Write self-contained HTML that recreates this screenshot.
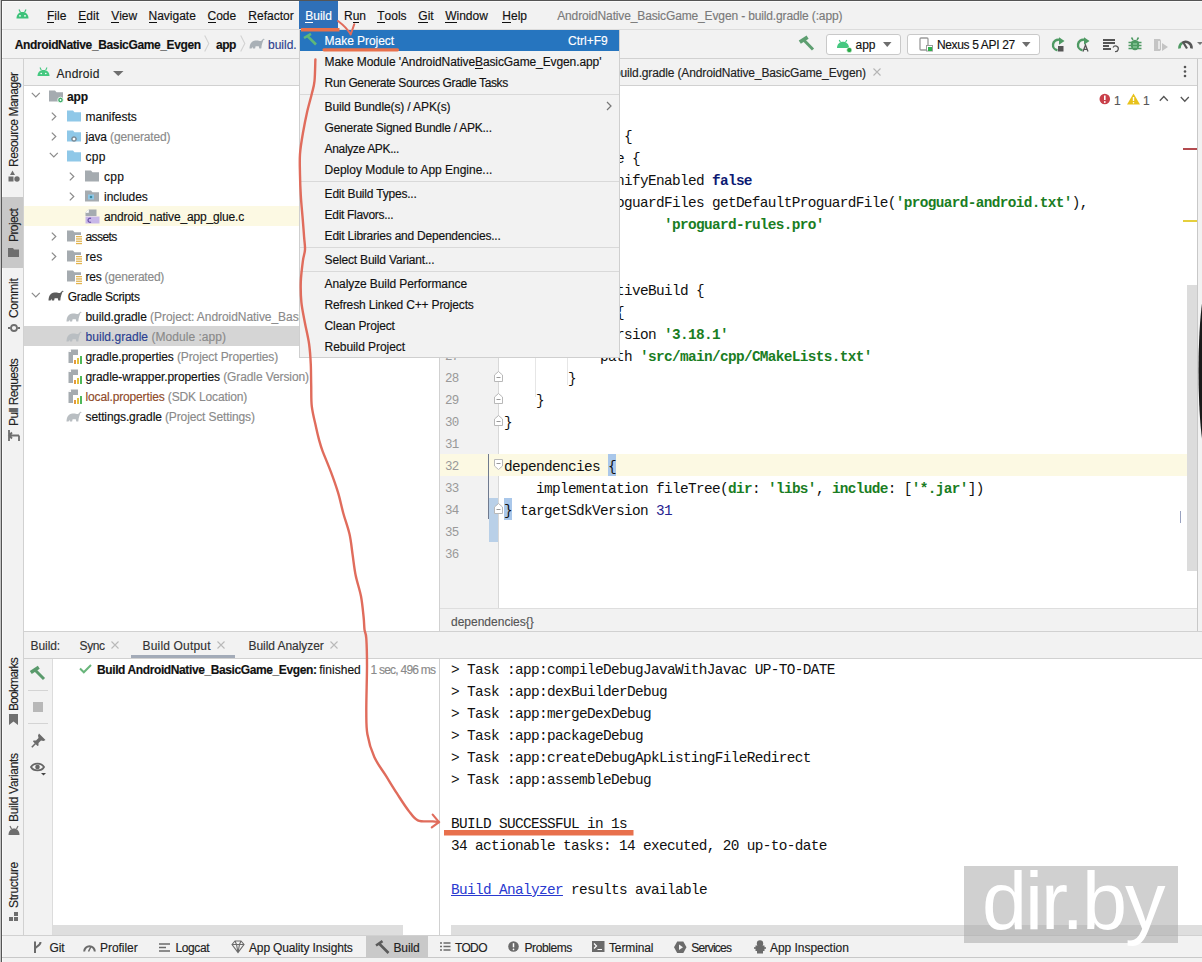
<!DOCTYPE html>
<html><head><meta charset="utf-8">
<style>
*{margin:0;padding:0;box-sizing:border-box}
html,body{width:1202px;height:962px;overflow:hidden;background:#f2f2f2}
body{position:relative;font-family:"Liberation Sans",sans-serif;font-size:12px;color:#1e1e1e}
.a{position:absolute}
.s{position:absolute;white-space:nowrap;-webkit-text-stroke:0.15px currentColor;font-family:"Liberation Sans",sans-serif;font-size:12px;line-height:14px;color:#111}
.m{position:absolute;white-space:pre;font-family:"Liberation Mono",monospace;font-size:14.4px;letter-spacing:-0.64px;line-height:22px;color:#101010}
.b{font-weight:bold}
.g{color:#8a8a8a}
u{text-decoration:none;border-bottom:1px solid currentColor;display:inline-block;line-height:11px}
svg{position:absolute;overflow:visible}
</style></head><body>
<div class="a" style="left:0px;top:0px;width:1202px;height:1px;background:#555;"></div>
<div class="a" style="left:2px;top:1px;width:1200px;height:1px;background:#fbfbfb;"></div>
<div class="a" style="left:0px;top:0px;width:1px;height:962px;background:#c4c4c4;"></div>
<div class="a" style="left:1px;top:0px;width:1px;height:962px;background:#555;"></div>
<div class="a" style="left:2px;top:1px;width:1px;height:961px;background:#fbfbfb;"></div>
<div class="a" style="left:2px;top:29px;width:1200px;height:1px;background:#dcdcdc;"></div>
<div class="a" style="left:299px;top:1px;width:39px;height:28px;background:#2f70b8;"></div>
<div class="a" style="left:2px;top:58px;width:1200px;height:1px;background:#d1d1d1;"></div>
<div class="a" style="left:23px;top:59px;width:1px;height:876px;background:#d1d1d1;"></div>
<div class="a" style="left:24px;top:85px;width:415px;height:1px;background:#d1d1d1;"></div>
<div class="a" style="left:24px;top:86px;width:415px;height:545px;background:#fff;"></div>
<div class="a" style="left:24px;top:206px;width:415px;height:20px;background:#fcf9e3;"></div>
<div class="a" style="left:24px;top:326px;width:415px;height:20px;background:#d5d5d5;"></div>
<div class="a" style="left:439px;top:59px;width:1px;height:572px;background:#d1d1d1;"></div>
<div class="a" style="left:440px;top:85px;width:758px;height:1px;background:#d1d1d1;"></div>
<div class="a" style="left:440px;top:86px;width:758px;height:523px;background:#fff;"></div>
<div class="a" style="left:440px;top:86px;width:58px;height:523px;background:#f2f2f2;"></div>
<div class="a" style="left:498px;top:86px;width:1px;height:523px;background:#d8d8d8;"></div>
<div class="a" style="left:1197px;top:59px;width:1px;height:572px;background:#c8c8c8;"></div>
<div class="a" style="left:440px;top:454px;width:757px;height:22px;background:#fcf9e3;"></div>
<div class="a" style="left:440px;top:608px;width:757px;height:1px;background:#dedede;"></div>
<div class="a" style="left:24px;top:631px;width:1178px;height:1px;background:#d1d1d1;"></div>
<div class="a" style="left:24px;top:658px;width:1178px;height:1px;background:#d1d1d1;"></div>
<div class="a" style="left:52px;top:659px;width:1px;height:276px;background:#dcdcdc;"></div>
<div class="a" style="left:53px;top:659px;width:386px;height:276px;background:#fff;"></div>
<div class="a" style="left:439px;top:659px;width:1px;height:276px;background:#d1d1d1;"></div>
<div class="a" style="left:440px;top:659px;width:762px;height:276px;background:#fff;"></div>
<div class="a" style="left:2px;top:935px;width:1200px;height:1px;background:#d1d1d1;"></div>
<div class="a" style="left:2px;top:957px;width:1200px;height:1px;background:#c8c8c8;"></div>
<div class="a" style="left:366px;top:936px;width:62px;height:21px;background:#c9c9c9;"></div>
<div class="s " style="left:47px;top:9.1px;"><u>F</u>ile</div>
<div class="s " style="left:78.3px;top:9.1px;"><u>E</u>dit</div>
<div class="s " style="left:111.2px;top:9.1px;"><u>V</u>iew</div>
<div class="s " style="left:148.5px;top:9.1px;"><u>N</u>avigate</div>
<div class="s " style="left:207.5px;top:9.1px;"><u>C</u>ode</div>
<div class="s " style="left:248.3px;top:9.1px;"><u>R</u>efactor</div>
<div class="s " style="left:377.2px;top:9.1px;"><u>T</u>ools</div>
<div class="s " style="left:418.3px;top:9.1px;"><u>G</u>it</div>
<div class="s " style="left:445.2px;top:9.1px;"><u>W</u>indow</div>
<div class="s " style="left:502.3px;top:9.1px;"><u>H</u>elp</div>
<div class="s " style="left:344px;top:9.1px;">R<u>u</u>n</div>
<div class="s " style="left:305.2px;top:9.1px;color:#fff"><u>B</u>uild</div>
<div class="s " style="left:557.2px;top:9.1px;color:#7a7a7a;letter-spacing:-0.138px">AndroidNative_BasicGame_Evgen - build.gradle (:app)</div>
<div class="s b" style="left:14.7px;top:38.2px;;letter-spacing:-0.367px">AndroidNative_BasicGame_Evgen</div>
<div class="s b" style="left:216px;top:38.2px;;letter-spacing:-0.511px">app</div>
<div class="s " style="left:268px;top:38.2px;color:#2f3f8f">build.</div>
<div class="s " style="left:56.5px;top:66.6px;color:#222;letter-spacing:0.248px">Android</div>
<div class="s b" style="left:67px;top:90.2px;;letter-spacing:-0.178px">app</div>
<div class="s " style="left:85.5px;top:110.2px;;letter-spacing:-0.006px">manifests</div>
<div class="s " style="left:85.5px;top:130.2px;;letter-spacing:-0.155px">java <span class="g">(generated)</span></div>
<div class="s " style="left:85.5px;top:150.2px;;letter-spacing:0.318px">cpp</div>
<div class="s " style="left:104px;top:170.2px;;letter-spacing:0.318px">cpp</div>
<div class="s " style="left:104px;top:190.2px;;letter-spacing:-0.028px">includes</div>
<div class="s " style="left:104px;top:210.2px;;letter-spacing:-0.164px">android_native_app_glue.c</div>
<div class="s " style="left:85.5px;top:230.2px;;letter-spacing:-0.564px">assets</div>
<div class="s " style="left:85.5px;top:250.2px;;letter-spacing:0.043px">res</div>
<div class="s " style="left:85.5px;top:270.2px;;letter-spacing:-0.230px">res <span class="g">(generated)</span></div>
<div class="s " style="left:67.7px;top:290.2px;;letter-spacing:-0.295px">Gradle Scripts</div>
<div class="s " style="left:85.5px;top:310.2px;;letter-spacing:-0.060px">build.gradle <span class="g">(Project: AndroidNative_BasicGame_Evgen)</span></div>
<div class="s " style="left:85.5px;top:330.2px;;letter-spacing:0.042px"><span style="color:#2a3f91">build.gradle</span> <span class="g">(Module :app)</span></div>
<div class="s " style="left:85.5px;top:350.2px;;letter-spacing:-0.109px">gradle.properties <span class="g">(Project Properties)</span></div>
<div class="s " style="left:85.5px;top:370.2px;;letter-spacing:-0.094px">gradle-wrapper.properties <span class="g">(Gradle Version)</span></div>
<div class="s " style="left:85.5px;top:390.2px;;letter-spacing:-0.144px"><span style="color:#8f4a2a">local.properties</span> <span class="g">(SDK Location)</span></div>
<div class="s " style="left:85.5px;top:410.2px;;letter-spacing:-0.121px">settings.gradle <span class="g">(Project Settings)</span></div>
<div class="s " style="left:614px;top:66.1px;color:#222;letter-spacing:-0.144px">build.gradle (AndroidNative_BasicGame_Evgen)</div>
<div class="s " style="left:451px;top:614.6px;color:#555">dependencies{}</div>
<div class="s " style="left:30.6px;top:638.6px;color:#333;letter-spacing:-0.086px">Build:</div>
<div class="s " style="left:79.5px;top:638.6px;color:#333;letter-spacing:-0.370px">Sync</div>
<div class="s " style="left:142.5px;top:638.6px;color:#333;letter-spacing:0.180px">Build Output</div>
<div class="s " style="left:248.5px;top:638.6px;color:#333;letter-spacing:-0.053px">Build Analyzer</div>
<div class="s b" style="left:97px;top:663.0px;;letter-spacing:-0.392px">Build AndroidNative_BasicGame_Evgen:</div>
<div class="s " style="left:319.2px;top:663.0px;;letter-spacing:0.030px">finished</div>
<div class="s g" style="left:370.4px;top:663.0px;;letter-spacing:-0.754px">1 sec, 496 ms</div>
<div class="s " style="left:49.5px;top:940.6px;color:#222;letter-spacing:-0.111px">Git</div>
<div class="s " style="left:100px;top:940.6px;color:#222;letter-spacing:-0.051px">Profiler</div>
<div class="s " style="left:175.5px;top:940.6px;color:#222;letter-spacing:-0.388px">Logcat</div>
<div class="s " style="left:249px;top:940.6px;color:#222;letter-spacing:-0.151px">App Quality Insights</div>
<div class="s " style="left:393.5px;top:940.6px;color:#222;letter-spacing:-0.137px">Build</div>
<div class="s " style="left:455px;top:940.6px;color:#222;letter-spacing:-0.662px">TODO</div>
<div class="s " style="left:524.5px;top:940.6px;color:#222;letter-spacing:-0.423px">Problems</div>
<div class="s " style="left:609px;top:940.6px;color:#222;letter-spacing:-0.131px">Terminal</div>
<div class="s " style="left:691.2px;top:940.6px;color:#222;letter-spacing:-0.739px">Services</div>
<div class="s " style="left:770px;top:940.6px;color:#222;letter-spacing:-0.042px">App Inspection</div>
<div class="a" style="left:2px;top:197px;width:21px;height:71px;background:#c8c8c8;"></div>
<div class="s" style="left:7.3px;top:166.8px;transform-origin:0 0;transform:rotate(-90deg);letter-spacing:-0.478px;color:#222">Resource Manager</div>
<div class="s" style="left:7.1px;top:242.2px;transform-origin:0 0;transform:rotate(-90deg);letter-spacing:-0.593px;color:#222">Project</div>
<div class="s" style="left:7.1px;top:317.9px;transform-origin:0 0;transform:rotate(-90deg);letter-spacing:-0.322px;color:#222">Commit</div>
<div class="s" style="left:7.1px;top:425.5px;transform-origin:0 0;transform:rotate(-90deg);letter-spacing:-0.526px;color:#222">Pull Requests</div>
<div class="s" style="left:6.9px;top:710.5px;transform-origin:0 0;transform:rotate(-90deg);letter-spacing:-0.780px;color:#222">Bookmarks</div>
<div class="s" style="left:6.9px;top:821.5px;transform-origin:0 0;transform:rotate(-90deg);letter-spacing:-0.318px;color:#222">Build Variants</div>
<div class="s" style="left:6.9px;top:907.5px;transform-origin:0 0;transform:rotate(-90deg);letter-spacing:-0.299px;color:#222">Structure</div>
<svg style="left:8px;top:170px" width="12" height="13"><path d="M4.5 0.5 L7 5 L2 5 Z" fill="#6e6e6e"/><rect x="0.5" y="6.5" width="5" height="5" fill="#6e6e6e"/><circle cx="9" cy="9" r="2.7" fill="#6e6e6e"/></svg>
<svg style="left:8px;top:248px" width="11" height="9"><path d="M0 0 H5 L6 1.5 H11 V9 H0 Z" fill="#6e6e6e"/></svg>
<svg style="left:8px;top:322px" width="12" height="12"><circle cx="6" cy="6" r="3" fill="none" stroke="#6e6e6e" stroke-width="1.8"/><path d="M0 6 H2.5 M9.5 6 H12" stroke="#6e6e6e" stroke-width="1.8"/></svg>
<svg style="left:8px;top:430px" width="12" height="11"><path d="M1 0 V11 M1 5.5 H11 M4 2.5 L1 5.5 L4 8.5 M11 5.5 V11" fill="none" stroke="#6e6e6e" stroke-width="1.8"/></svg>
<svg style="left:9px;top:714px" width="9" height="12"><path d="M0 0 H9 V11 L4.5 7.5 L0 11 Z" fill="#6e6e6e"/></svg>
<svg style="left:8px;top:826px" width="12" height="9"><path d="M0.5 9 C0.5 5 3 2.5 6 2.5 C9 2.5 11.5 5 11.5 9 Z" fill="#6e6e6e"/><path d="M2 0 L3.5 3 M10 0 L8.5 3" stroke="#6e6e6e" stroke-width="1.2"/></svg>
<svg style="left:9px;top:912px" width="10" height="10"><rect x="5" y="0" width="4" height="4" fill="#6e6e6e"/><rect x="0" y="5" width="4" height="4" fill="#6e6e6e"/><rect x="5" y="5" width="4" height="4" fill="#6e6e6e"/></svg>
<svg style="left:0;top:0" width="0" height="0"><defs>
<path id="eleph" d="M0.5 10.5 C0.5 6 2.5 2.6 6.5 2.4 C9.5 2.2 11 3.4 12 3 C13 2.6 13.5 1.2 14.5 0.8 C15.6 0.5 15.8 1.8 14.9 2.1 L14.6 1.6 C13.8 4 12.6 6 12.3 10.5 L10.3 10.5 L9.8 8.2 L6.6 8.2 L6.1 10.5 L3.9 10.5 L3.4 8.8 L2.6 10.5 Z"/>
<path id="droid" d="M0 8 C0 4.2 2.7 1.8 6 1.8 C9.3 1.8 12 4.2 12 8 Z M2.2 0 L3.6 2.6 M9.8 0 L8.4 2.6"/>
<path id="hammer" d="M0.5 5 L4.5 1 L8 0.8 L9.5 2.3 L6.8 3.2 L15 11.5 L13 13.5 L4.8 5.2 L2.6 7.1 Z"/>
</defs></svg>
<svg style="left:16px;top:9px" width="13" height="10"><path d="M0.5 9.5 C0.5 5.5 3 3 6.5 3 C10 3 12.5 5.5 12.5 9.5 Z" fill="#3dc27a"/><path d="M3 0.5 L4.5 3.5 M10 0.5 L8.5 3.5" stroke="#3dc27a" stroke-width="1.2"/><circle cx="4" cy="6.8" r="0.9" fill="#fff"/><circle cx="9" cy="6.8" r="0.9" fill="#fff"/></svg>
<svg style="left:204px;top:35px" width="6" height="17"><path d="M0.7 0.5 L4.8 8.5 L0.7 16.5" fill="none" stroke="#d2d2d2" stroke-width="1.1"/></svg>
<svg style="left:240px;top:35px" width="6" height="17"><path d="M0.7 0.5 L4.8 8.5 L0.7 16.5" fill="none" stroke="#d2d2d2" stroke-width="1.1"/></svg>
<svg style="left:249px;top:38px" width="16" height="12"><use href="#eleph" fill="#a9b0b6"/></svg>
<svg style="left:799px;top:36px" width="16" height="15"><path d="M0.8 6.2 L8.6 1.2" fill="none" stroke="#5d9e70" stroke-width="3.8"/><path d="M5 4.2 L14 13.5" fill="none" stroke="#5d9e70" stroke-width="3"/></svg>
<div class="a" style="left:826px;top:34px;width:75px;height:21px;background:#fff;border:1px solid #c9c9c9;border-radius:3px"></div>
<svg style="left:837px;top:40px" width="14" height="13"><path d="M0 8 C0 4.2 2.7 1.8 6 1.8 C9.3 1.8 12 4.2 12 8 Z" fill="#45c880"/><path d="M2.2 0 L3.6 2.6 M9.8 0 L8.4 2.6" stroke="#45c880" stroke-width="1.1"/><circle cx="12.3" cy="10" r="2.6" fill="#27a845" stroke="#fff" stroke-width="0.6"/></svg>
<div class="s " style="left:855.5px;top:38.4px;color:#111">app</div>
<svg style="left:883px;top:42px" width="9" height="6"><path d="M0 0 H8.5 L4.25 5 Z" fill="#6e6e6e"/></svg>
<div class="a" style="left:907px;top:34px;width:133px;height:21px;background:#fff;border:1px solid #c9c9c9;border-radius:3px"></div>
<svg style="left:919px;top:37px" width="14" height="15"><rect x="1" y="1" width="8" height="12" rx="1" fill="none" stroke="#9a9a9a" stroke-width="1.3"/><rect x="7.5" y="8.5" width="6" height="5.5" fill="#fff" stroke="#9a9a9a" stroke-width="1"/><rect x="9" y="10" width="4" height="4" fill="#2fb24c"/></svg>
<div class="s " style="left:936.9px;top:38.4px;color:#111;letter-spacing:-0.344px">Nexus 5 API 27</div>
<svg style="left:1022px;top:42px" width="9" height="6"><path d="M0 0 H8.5 L4.25 5 Z" fill="#6e6e6e"/></svg>
<svg style="left:1050px;top:36px" width="16" height="16"><path d="M7.5 14.2 A5.2 5.2 0 0 1 9 3.8" fill="none" stroke="#4e9a63" stroke-width="2.4"/><path d="M9 1.2 L14.5 5 L9 8.8 Z" fill="#4e9a63"/><rect x="8" y="10" width="5.5" height="5.5" fill="#555"/></svg>
<svg style="left:1075px;top:36px" width="16" height="16"><path d="M7.5 14.2 A5.2 5.2 0 0 1 9 3.8" fill="none" stroke="#4e9a63" stroke-width="2.4"/><path d="M9 1.2 L14.5 5 L9 8.8 Z" fill="#4e9a63"/><path d="M8 15.5 L10.5 9 L13 15.5 M9 13.3 H12" fill="none" stroke="#555" stroke-width="1.3"/></svg>
<svg style="left:1103px;top:38px" width="16" height="15"><rect x="0" y="1" width="12" height="2" fill="#555"/><rect x="0" y="4" width="12" height="2" fill="#555"/><rect x="0" y="7" width="6" height="2" fill="#555"/><rect x="0" y="10" width="8" height="2" fill="#555"/><path d="M10 9.5 A2.8 2.8 0 1 1 12 13.5" fill="none" stroke="#555" stroke-width="1.2"/></svg>
<svg style="left:1128px;top:37px" width="14" height="14"><ellipse cx="7" cy="8" rx="4.3" ry="5.2" fill="#4e9a63"/><path d="M0.5 5.5 H13.5 M0.5 8.5 H13.5 M0.5 11.5 H13.5 M3.5 0.5 L5 3 M10.5 0.5 L9 3" stroke="#4e9a63" stroke-width="1.5"/><path d="M5 7 H9 M5 10 H9" stroke="#9fe0b0" stroke-width="1.2"/></svg>
<svg style="left:1153px;top:38px" width="16" height="14"><path d="M1 1 H7 L8 2.5 V11.5 L7 13 H1 Z" fill="#c4c4c4"/><path d="M9 5 L15 9 L9 13 Z" fill="#c4c4c4"/><rect x="5" y="3" width="2" height="8" fill="#e6e6e6"/></svg>
<svg style="left:1178px;top:38px" width="15" height="11"><path d="M1.5 10.5 A6 6 0 0 1 4 5" fill="none" stroke="#4e9a63" stroke-width="2.6"/><path d="M4 5 A6 6 0 0 1 13.5 10.5" fill="none" stroke="#555" stroke-width="2.6"/><path d="M5 4 L9 10.5" stroke="#555" stroke-width="2.2"/></svg>
<svg style="left:1197px;top:42px" width="6" height="4"><path d="M0 0 H6 L3 3 Z" fill="#777"/></svg>
<svg style="left:37px;top:67px" width="14" height="10"><path d="M0.5 9 C0.5 5.3 3 3 6.5 3 C10 3 12.5 5.3 12.5 9 Z" fill="#45c880"/><path d="M3 0.5 L4.3 3.2 M10 0.5 L8.7 3.2" stroke="#45c880" stroke-width="1.1"/><circle cx="4.2" cy="6.5" r="0.8" fill="#fff"/><circle cx="8.8" cy="6.5" r="0.8" fill="#fff"/></svg>
<svg style="left:113px;top:71px" width="11" height="6"><path d="M0 0 H10.5 L5.25 5 Z" fill="#6e6e6e"/></svg>
<svg style="left:873px;top:68px" width="8" height="8"><path d="M0.5 0.5 L7.5 7.5 M7.5 0.5 L0.5 7.5" stroke="#b5b5b5" stroke-width="1.1"/></svg>
<svg style="left:1183px;top:65px" width="4" height="13"><circle cx="2" cy="2" r="1.3" fill="#555"/><circle cx="2" cy="6.5" r="1.3" fill="#555"/><circle cx="2" cy="11" r="1.3" fill="#555"/></svg>
<svg style="left:1099px;top:93px" width="12" height="12"><circle cx="5.8" cy="6" r="5.3" fill="#c9404a"/><path d="M5.8 2.5 V7" stroke="#fff" stroke-width="1.6"/><circle cx="5.8" cy="9" r="0.9" fill="#fff"/></svg>
<div class="s " style="left:1114px;top:93.6px;color:#555">1</div>
<svg style="left:1127px;top:93px" width="14" height="12"><path d="M6.5 0.5 L13 11.5 H0 Z" fill="#e8c21a"/><path d="M6.5 4 V8" stroke="#fff" stroke-width="1.4"/><circle cx="6.5" cy="9.8" r="0.8" fill="#fff"/></svg>
<div class="s " style="left:1143px;top:93.6px;color:#555">1</div>
<svg style="left:1159px;top:95px" width="10" height="7"><path d="M0.8 5.8 L4.8 1.5 L8.8 5.8" fill="none" stroke="#555" stroke-width="1.3"/></svg>
<svg style="left:1180px;top:96px" width="10" height="7"><path d="M0.8 1 L4.8 5.3 L8.8 1" fill="none" stroke="#555" stroke-width="1.3"/></svg>
<div class="a" style="left:1183px;top:148px;width:14px;height:2px;background:#b34a4f;"></div>
<div class="a" style="left:1183px;top:220px;width:14px;height:2px;background:#e5cf3d;"></div>
<div class="a" style="left:1187px;top:285px;width:10px;height:286px;background:#dcdcdc;"></div>
<div class="a" style="left:1180px;top:511px;width:1px;height:12px;background:#99a2c0;"></div>
<div class="a" style="left:1198px;top:59px;width:4px;height:572px;background:#f2f2f2;"></div>
<svg style="left:1197px;top:280px" width="5" height="190"><ellipse cx="11.5" cy="91" rx="10" ry="88.7" fill="#1a1a1a"/></svg>
<svg style="left:31px;top:92px" width="10" height="6"><path d="M0.8 0.8 L4.8 4.8 L8.8 0.8" fill="none" stroke="#8a8a8a" stroke-width="1.2"/></svg>
<svg style="left:49px;top:90px" width="16" height="13"><path d="M0 0.5 H6 L7.5 2.3 H14 V11.5 H0 Z" fill="#a5abb0"/><circle cx="11.5" cy="10" r="2.8" fill="#3fae6a" stroke="#fff" stroke-width="0.8"/><circle cx="11.5" cy="10" r="0.9" fill="#fff"/></svg>
<svg style="left:51px;top:112px" width="6" height="9"><path d="M0.8 0.6 L4.8 4.5 L0.8 8.4" fill="none" stroke="#8a8a8a" stroke-width="1.2"/></svg>
<svg style="left:67px;top:110px" width="16" height="13"><path d="M0 0.5 H6 L7.5 2.3 H14 V11.5 H0 Z" fill="#8fc8e8"/></svg>
<svg style="left:51px;top:132px" width="6" height="9"><path d="M0.8 0.6 L4.8 4.5 L0.8 8.4" fill="none" stroke="#8a8a8a" stroke-width="1.2"/></svg>
<svg style="left:67px;top:130px" width="16" height="13"><path d="M0 0.5 H6 L7.5 2.3 H14 V11.5 H0 Z" fill="#8fc8e8"/><g stroke="#7c8a94" stroke-width="1.3"><path d="M7 6 V12 M4 9 H10 M4.9 6.9 L9.1 11.1 M9.1 6.9 L4.9 11.1"/></g><circle cx="7" cy="9" r="1.3" fill="#fff"/></svg>
<svg style="left:49px;top:152px" width="10" height="6"><path d="M0.8 0.8 L4.8 4.8 L8.8 0.8" fill="none" stroke="#8a8a8a" stroke-width="1.2"/></svg>
<svg style="left:67px;top:150px" width="16" height="13"><path d="M0 0.5 H6 L7.5 2.3 H14 V11.5 H0 Z" fill="#8fc8e8"/></svg>
<svg style="left:69px;top:172px" width="6" height="9"><path d="M0.8 0.6 L4.8 4.5 L0.8 8.4" fill="none" stroke="#8a8a8a" stroke-width="1.2"/></svg>
<svg style="left:85px;top:170px" width="16" height="13"><path d="M0 0.5 H6 L7.5 2.3 H14 V11.5 H0 Z" fill="#a5abb0"/></svg>
<svg style="left:69px;top:192px" width="6" height="9"><path d="M0.8 0.6 L4.8 4.5 L0.8 8.4" fill="none" stroke="#8a8a8a" stroke-width="1.2"/></svg>
<svg style="left:85px;top:190px" width="16" height="13"><path d="M0 0.5 H6 L7.5 2.3 H14 V11.5 H0 Z" fill="#a5abb0"/><rect x="3" y="4.5" width="6" height="5" fill="#8fc8e8"/><circle cx="6" cy="7" r="1.3" fill="#3a8aa0"/></svg>
<svg style="left:85px;top:209px" width="15" height="15"><path d="M3.5 0.5 H11.5 V7 H0.5 V3.5 Z" fill="#a5abb0"/><path d="M3.5 0.5 V3.5 H0.5" fill="#fff" stroke="#fff" stroke-width="0.6"/><rect x="0.5" y="7.5" width="14" height="7" fill="#c7b7e8"/><path d="M6 9.5 A2 2 0 1 0 6 13" fill="none" stroke="#6b4fa8" stroke-width="1.2"/></svg>
<svg style="left:51px;top:232px" width="6" height="9"><path d="M0.8 0.6 L4.8 4.5 L0.8 8.4" fill="none" stroke="#8a8a8a" stroke-width="1.2"/></svg>
<svg style="left:67px;top:230px" width="16" height="13"><path d="M0 0.5 H6 L7.5 2.3 H14 V11.5 H0 Z" fill="#a5abb0"/><rect x="8" y="5" width="8" height="10" fill="#fff"/><g fill="#e2b450"><rect x="9" y="6" width="6" height="1.3"/><rect x="9" y="8.3" width="6" height="1.3"/><rect x="9" y="10.6" width="6" height="1.3"/><rect x="9" y="12.9" width="6" height="1.3"/></g></svg>
<svg style="left:51px;top:252px" width="6" height="9"><path d="M0.8 0.6 L4.8 4.5 L0.8 8.4" fill="none" stroke="#8a8a8a" stroke-width="1.2"/></svg>
<svg style="left:67px;top:250px" width="16" height="13"><path d="M0 0.5 H6 L7.5 2.3 H14 V11.5 H0 Z" fill="#a5abb0"/><rect x="8" y="5" width="8" height="10" fill="#fff"/><g fill="#e2b450"><rect x="9" y="6" width="6" height="1.3"/><rect x="9" y="8.3" width="6" height="1.3"/><rect x="9" y="10.6" width="6" height="1.3"/><rect x="9" y="12.9" width="6" height="1.3"/></g></svg>
<svg style="left:67px;top:270px" width="16" height="13"><path d="M0 0.5 H6 L7.5 2.3 H14 V11.5 H0 Z" fill="#a5abb0"/><rect x="8" y="5" width="8" height="10" fill="#fff"/><g fill="#e2b450"><rect x="9" y="6" width="6" height="1.3"/><rect x="9" y="8.3" width="6" height="1.3"/><rect x="9" y="10.6" width="6" height="1.3"/><rect x="9" y="12.9" width="6" height="1.3"/></g></svg>
<svg style="left:31px;top:292px" width="10" height="6"><path d="M0.8 0.8 L4.8 4.8 L8.8 0.8" fill="none" stroke="#8a8a8a" stroke-width="1.2"/></svg>
<svg style="left:48px;top:290px" width="16" height="12"><use href="#eleph" fill="#5b5b5b"/></svg>
<svg style="left:66px;top:311px" width="16" height="12"><use href="#eleph" fill="#b9bec2"/></svg>
<svg style="left:66px;top:331px" width="16" height="12"><use href="#eleph" fill="#b9bec2"/></svg>
<svg style="left:66px;top:411px" width="16" height="12"><use href="#eleph" fill="#b9bec2"/></svg>
<svg style="left:68px;top:349px" width="14" height="15"><path d="M3 0.5 H10 V14 H0.5 V3 Z" fill="#a5abb0"/><path d="M3 0.5 V3 H0.5" fill="#fff"/><rect x="5" y="6" width="9" height="9" fill="#fff"/><rect x="6" y="11" width="2" height="4" fill="#e59a3a"/><rect x="9" y="9" width="2" height="6" fill="#e2c23a"/><rect x="12" y="7" width="2" height="8" fill="#4fb85a"/></svg>
<svg style="left:68px;top:369px" width="14" height="15"><path d="M3 0.5 H10 V14 H0.5 V3 Z" fill="#a5abb0"/><path d="M3 0.5 V3 H0.5" fill="#fff"/><rect x="5" y="6" width="9" height="9" fill="#fff"/><rect x="6" y="11" width="2" height="4" fill="#e59a3a"/><rect x="9" y="9" width="2" height="6" fill="#e2c23a"/><rect x="12" y="7" width="2" height="8" fill="#4fb85a"/></svg>
<svg style="left:68px;top:389px" width="14" height="15"><path d="M3 0.5 H10 V14 H0.5 V3 Z" fill="#a5abb0"/><path d="M3 0.5 V3 H0.5" fill="#fff"/><rect x="5" y="6" width="9" height="9" fill="#fff"/><rect x="6" y="11" width="2" height="4" fill="#e59a3a"/><rect x="9" y="9" width="2" height="6" fill="#e2c23a"/><rect x="12" y="7" width="2" height="8" fill="#4fb85a"/></svg>
<svg style="left:111px;top:641px" width="8" height="8"><path d="M0.5 0.5 L7.5 7.5 M7.5 0.5 L0.5 7.5" stroke="#b9b9b9" stroke-width="1.1"/></svg>
<svg style="left:217px;top:641px" width="8" height="8"><path d="M0.5 0.5 L7.5 7.5 M7.5 0.5 L0.5 7.5" stroke="#b9b9b9" stroke-width="1.1"/></svg>
<svg style="left:330px;top:641px" width="8" height="8"><path d="M0.5 0.5 L7.5 7.5 M7.5 0.5 L0.5 7.5" stroke="#b9b9b9" stroke-width="1.1"/></svg>
<div class="a" style="left:131px;top:655px;width:104px;height:3px;background:#a3abb8;"></div>
<svg style="left:30px;top:666px" width="16" height="14"><path d="M0.8 6.5 L8.8 1.3" fill="none" stroke="#5a9a6c" stroke-width="3.6"/><path d="M5.5 4.5 L14 13" fill="none" stroke="#5a9a6c" stroke-width="3"/></svg>
<div class="a" style="left:28px;top:690px;width:20px;height:1px;background:#d4d4d4;"></div>
<div class="a" style="left:33px;top:702px;width:10px;height:10px;background:#b8b8b8;"></div>
<div class="a" style="left:28px;top:723px;width:20px;height:1px;background:#d4d4d4;"></div>
<svg style="left:31px;top:733px" width="15" height="15"><path d="M8 0.5 L14.5 7 L12.5 8 L10 7.5 L7.5 10 L7.5 12.5 L6.5 13 L2 8.5 L2.5 7.5 L5 7.5 L7.5 5 L7 2.5 Z" fill="#6b6b6b"/><path d="M4.5 10.5 L0.8 14.2" stroke="#6b6b6b" stroke-width="1.6"/></svg>
<svg style="left:30px;top:761px" width="17" height="15"><path d="M1 6 C3.5 1.5 11.5 1.5 14 6 C11.5 10.5 3.5 10.5 1 6 Z" fill="none" stroke="#666" stroke-width="1.8"/><circle cx="7.5" cy="6" r="2.3" fill="#666"/><path d="M11 12 H16 L13.5 14.5 Z" fill="#444"/></svg>
<svg style="left:79px;top:664px" width="13" height="10"><path d="M1 4.5 L4.8 8.3 L12 1" fill="none" stroke="#68b57a" stroke-width="2"/></svg>
<div class="a" style="left:53px;top:925px;width:350px;height:10px;background:#dedede;"></div>
<div class="a" style="left:451px;top:925px;width:751px;height:10px;background:#dedede;"></div>
<svg style="left:33px;top:941px" width="10" height="13"><path d="M2 0.5 V12 M2 8 C2 5 7.5 5.5 7.5 1" fill="none" stroke="#6b6b6b" stroke-width="2"/></svg>
<svg style="left:83px;top:943px" width="14" height="9"><path d="M1.2 8.5 A5.3 5.3 0 0 1 11.8 8.5" fill="none" stroke="#6b6b6b" stroke-width="2"/><path d="M5.5 8.5 L8 3.5" stroke="#6b6b6b" stroke-width="1.6"/></svg>
<svg style="left:159px;top:943px" width="12" height="10"><path d="M0 1 H11 M0 4.5 H7 M0 8 H11" stroke="#6b6b6b" stroke-width="1.6"/></svg>
<svg style="left:231px;top:940px" width="14" height="14"><path d="M1 4.5 L4 1 H10 L13 4.5 L7 12.5 Z M1 4.5 H13 M4 1 L5.5 4.5 L7 12.5 L8.5 4.5 L10 1" fill="none" stroke="#6b6b6b" stroke-width="1.1"/></svg>
<svg style="left:375px;top:940px" width="15" height="14"><path d="M1 5.5 L7.5 1.2 M4 3.5 L13.5 13" fill="none" stroke="#5a5a5a" stroke-width="2.6"/></svg>
<svg style="left:440px;top:942px" width="11" height="10"><path d="M0 1 H2 M0 4.5 H2 M0 8 H2 M3.5 1 H10.5 M3.5 4.5 H10.5 M3.5 8 H10.5" stroke="#6b6b6b" stroke-width="1.5"/></svg>
<svg style="left:508px;top:941px" width="12" height="12"><circle cx="5.5" cy="5.5" r="5.3" fill="#6b6b6b"/><path d="M5.5 2.2 V6.3" stroke="#fff" stroke-width="1.5"/><circle cx="5.5" cy="8.4" r="0.85" fill="#fff"/></svg>
<svg style="left:592px;top:941px" width="13" height="12"><rect x="0" y="0" width="12.5" height="11" fill="#6b6b6b"/><path d="M2 2.5 L4.5 5 L2 7.5 M5.5 8.5 H10" fill="none" stroke="#fff" stroke-width="1.2"/></svg>
<svg style="left:674px;top:941px" width="13" height="13"><path d="M3.2 0.5 H9.3 L12.5 6.3 L9.3 12 H3.2 L0 6.3 Z" fill="#6b6b6b"/><path d="M5 3.5 L9 6.3 L5 9 Z" fill="#f2f2f2"/></svg>
<svg style="left:754px;top:940px" width="12" height="14"><circle cx="6" cy="3.5" r="3.2" fill="#6b6b6b"/><rect x="1.5" y="5.5" width="9" height="5.5" fill="#6b6b6b"/><path d="M0 8 H12" stroke="#6b6b6b" stroke-width="1.6"/><rect x="3" y="10.5" width="6" height="3" fill="#6b6b6b"/></svg>
<div class="a" style="left:535px;top:357px;width:1px;height:40px;background:#e6e6e6;"></div>
<div class="a" style="left:567px;top:357px;width:1px;height:28px;background:#e6e6e6;"></div>
<div class="a" style="left:488px;top:454px;width:1px;height:65px;background:#6f7a8f;"></div>
<div class="a" style="left:489px;top:498px;width:9px;height:44px;background:#b9d0e8;"></div>
<div class="a" style="left:608px;top:454px;width:8px;height:22px;background:#a9c7ea;"></div>
<div class="a" style="left:504px;top:498px;width:8px;height:22px;background:#a9c7ea;"></div>
<svg style="left:494px;top:371px" width="10" height="12"><path d="M0.5 4 L4.5 0.5 L8.5 4 V10.5 H0.5 Z" fill="#fff" stroke="#b8b8b8" stroke-width="1"/><path d="M2.5 6.5 H6.5" stroke="#999" stroke-width="1"/></svg>
<svg style="left:494px;top:393px" width="10" height="12"><path d="M0.5 4 L4.5 0.5 L8.5 4 V10.5 H0.5 Z" fill="#fff" stroke="#b8b8b8" stroke-width="1"/><path d="M2.5 6.5 H6.5" stroke="#999" stroke-width="1"/></svg>
<svg style="left:494px;top:415px" width="10" height="12"><path d="M0.5 4 L4.5 0.5 L8.5 4 V10.5 H0.5 Z" fill="#fff" stroke="#b8b8b8" stroke-width="1"/><path d="M2.5 6.5 H6.5" stroke="#999" stroke-width="1"/></svg>
<svg style="left:494px;top:503px" width="10" height="12"><path d="M0.5 4 L4.5 0.5 L8.5 4 V10.5 H0.5 Z" fill="#fff" stroke="#b8b8b8" stroke-width="1"/><path d="M2.5 6.5 H6.5" stroke="#999" stroke-width="1"/></svg>
<svg style="left:494px;top:459px" width="10" height="12"><path d="M0.5 0.5 H8.5 V7 L4.5 10.5 L0.5 7 Z" fill="#fff" stroke="#b8b8b8" stroke-width="1"/><path d="M2.5 4.5 H6.5" stroke="#999" stroke-width="1"/></svg>
<div class="m" style="left:504px;top:125.5px;">    buildTypes {</div>
<div class="m" style="left:504px;top:147.5px;">        release {</div>
<div class="m" style="left:504px;top:169.5px;">            minifyEnabled <span style="color:#0d1a73;font-weight:bold">false</span></div>
<div class="m" style="left:504px;top:191.5px;">            proguardFiles getDefaultProguardFile(<span style="color:#1a7d23;font-weight:bold">'proguard-android.txt'</span>),</div>
<div class="m" style="left:504px;top:213.5px;">                    <span style="color:#1a7d23;font-weight:bold">'proguard-rules.pro'</span></div>
<div class="m" style="left:504px;top:235.5px;">        }</div>
<div class="m" style="left:504px;top:257.5px;">    }</div>
<div class="m" style="left:504px;top:279.5px;">    externalNativeBuild {</div>
<div class="m" style="left:504px;top:301.5px;">        cmake {</div>
<div class="m" style="left:504px;top:323.5px;">            version <span style="color:#1a7d23;font-weight:bold">'3.18.1'</span></div>
<div class="m" style="left:504px;top:345.5px;">            path <span style="color:#1a7d23;font-weight:bold">'src/main/cpp/CMakeLists.txt'</span></div>
<div class="m" style="left:504px;top:367.5px;">        }</div>
<div class="m" style="left:504px;top:389.5px;">    }</div>
<div class="m" style="left:504px;top:411.5px;">}</div>
<div class="m" style="left:504px;top:433.5px;"></div>
<div class="m" style="left:504px;top:455.5px;">dependencies {</div>
<div class="m" style="left:504px;top:477.5px;">    implementation fileTree(<span style="color:#1a7d23;font-weight:bold">dir</span>: <span style="color:#1a7d23;font-weight:bold">'libs'</span>, <span style="color:#1a7d23;font-weight:bold">include</span>: [<span style="color:#1a7d23;font-weight:bold">'*.jar'</span>])</div>
<div class="m" style="left:504px;top:499.5px;">} targetSdkVersion <span style="color:#27238f">31</span></div>
<div class="m" style="left:445px;top:81.5px;color:#999;font-size:12.5px">15</div>
<div class="m" style="left:445px;top:103.5px;color:#999;font-size:12.5px">16</div>
<div class="m" style="left:445px;top:125.5px;color:#999;font-size:12.5px">17</div>
<div class="m" style="left:445px;top:147.5px;color:#999;font-size:12.5px">18</div>
<div class="m" style="left:445px;top:169.5px;color:#999;font-size:12.5px">19</div>
<div class="m" style="left:445px;top:191.5px;color:#999;font-size:12.5px">20</div>
<div class="m" style="left:445px;top:213.5px;color:#999;font-size:12.5px">21</div>
<div class="m" style="left:445px;top:235.5px;color:#999;font-size:12.5px">22</div>
<div class="m" style="left:445px;top:257.5px;color:#999;font-size:12.5px">23</div>
<div class="m" style="left:445px;top:279.5px;color:#999;font-size:12.5px">24</div>
<div class="m" style="left:445px;top:301.5px;color:#999;font-size:12.5px">25</div>
<div class="m" style="left:445px;top:323.5px;color:#999;font-size:12.5px">26</div>
<div class="m" style="left:445px;top:345.5px;color:#999;font-size:12.5px">27</div>
<div class="m" style="left:445px;top:367.5px;color:#999;font-size:12.5px">28</div>
<div class="m" style="left:445px;top:389.5px;color:#999;font-size:12.5px">29</div>
<div class="m" style="left:445px;top:411.5px;color:#999;font-size:12.5px">30</div>
<div class="m" style="left:445px;top:433.5px;color:#999;font-size:12.5px">31</div>
<div class="m" style="left:445px;top:455.5px;color:#999;font-size:12.5px">32</div>
<div class="m" style="left:445px;top:477.5px;color:#999;font-size:12.5px">33</div>
<div class="m" style="left:445px;top:499.5px;color:#999;font-size:12.5px">34</div>
<div class="m" style="left:445px;top:521.5px;color:#999;font-size:12.5px">35</div>
<div class="m" style="left:445px;top:543.5px;color:#999;font-size:12.5px">36</div>
<div class="m" style="left:451px;top:658.8px;">&gt; Task :app:compileDebugJavaWithJavac UP-TO-DATE</div>
<div class="m" style="left:451px;top:680.8px;">&gt; Task :app:dexBuilderDebug</div>
<div class="m" style="left:451px;top:702.8px;">&gt; Task :app:mergeDexDebug</div>
<div class="m" style="left:451px;top:724.8px;">&gt; Task :app:packageDebug</div>
<div class="m" style="left:451px;top:746.8px;">&gt; Task :app:createDebugApkListingFileRedirect</div>
<div class="m" style="left:451px;top:768.8px;">&gt; Task :app:assembleDebug</div>
<div class="m" style="left:451px;top:812.8px;">BUILD SUCCESSFUL in 1s</div>
<div class="m" style="left:451px;top:834.8px;">34 actionable tasks: 14 executed, 20 up-to-date</div>
<div class="m" style="left:451px;top:878.8px;"><span style="color:#2a3ad0;text-decoration:underline">Build Analyzer</span> results available</div>
<div class="a" style="left:299px;top:30px;width:321px;height:328px;background:#f2f2f2;border:1px solid #cfcfcf;border-top:none"></div>
<div class="a" style="left:300px;top:30px;width:319px;height:21px;background:#2675bf;"></div>
<svg style="left:303px;top:33px" width="14" height="13"><path d="M1 5 L8 0.8 M4.3 2.8 L13 11.5" fill="none" stroke="#5fb878" stroke-width="2.6"/></svg>
<div class="s " style="left:324.6px;top:34.3px;color:#fff;letter-spacing:-0.044px">Make Project</div>
<div class="s " style="left:324.6px;top:55.3px;;letter-spacing:-0.102px">Make Module 'AndroidNative<u>B</u>asicGame_Evgen.app'</div>
<div class="s " style="left:324.6px;top:76.3px;;letter-spacing:-0.384px">Run Generate Sources Gradle Tasks</div>
<div class="s " style="left:324.6px;top:100.3px;;letter-spacing:-0.122px">Build Bundle(s) / APK(s)</div>
<div class="s " style="left:324.6px;top:121.3px;;letter-spacing:-0.245px">Generate Signed Bundle / APK...</div>
<div class="s " style="left:324.6px;top:142.3px;;letter-spacing:-0.349px">Analyze APK...</div>
<div class="s " style="left:324.6px;top:163.3px;;letter-spacing:-0.014px">Deploy Module to App Engine...</div>
<div class="s " style="left:324.6px;top:187.3px;;letter-spacing:-0.202px">Edit Build Types...</div>
<div class="s " style="left:324.6px;top:208.3px;;letter-spacing:-0.310px">Edit Flavors...</div>
<div class="s " style="left:324.6px;top:229.3px;;letter-spacing:-0.222px">Edit Libraries and Dependencies...</div>
<div class="s " style="left:324.6px;top:253.3px;;letter-spacing:-0.176px">Select Build Variant...</div>
<div class="s " style="left:324.6px;top:277.3px;;letter-spacing:-0.094px">Analyze Build Performance</div>
<div class="s " style="left:324.6px;top:298.3px;;letter-spacing:-0.160px">Refresh Linked C++ Projects</div>
<div class="s " style="left:324.6px;top:319.3px;;letter-spacing:-0.141px">Clean Project</div>
<div class="s " style="left:324.6px;top:340.3px;;letter-spacing:-0.065px">Rebuild Project</div>
<div class="s " style="left:568.1px;top:34.3px;color:#fff;letter-spacing:0.004px">Ctrl+F9</div>
<div class="a" style="left:300px;top:94px;width:319px;height:1px;background:#d9d9d9;"></div>
<div class="a" style="left:300px;top:181px;width:319px;height:1px;background:#d9d9d9;"></div>
<div class="a" style="left:300px;top:247px;width:319px;height:1px;background:#d9d9d9;"></div>
<div class="a" style="left:300px;top:271px;width:319px;height:1px;background:#d9d9d9;"></div>
<svg style="left:606px;top:101px" width="6" height="10"><path d="M1 1 L5 5 L1 9" fill="none" stroke="#777" stroke-width="1.2"/></svg>
<svg style="left:0;top:0" width="1202" height="962"><path d="M301 29.8 L339.5 29.8" stroke="#e8704c" stroke-width="3.6"/><path d="M324 49.8 L397.5 49.8" stroke="#e8704c" stroke-width="3.2" stroke-linecap="round"/><path d="M444 832.8 L633.5 832.8" stroke="#e8704c" stroke-width="5.6"/><path d="M338 21 C342 24 347 28 350.7 34.5 M354.3 24.2 L350.7 34.5" fill="none" stroke="#e06c5c" stroke-width="2" stroke-linecap="round"/></svg>
<svg style="left:0;top:0" width="1202" height="962"><path d="M315.4 59.4 C315.2 63.0 315.1 75.5 314.5 81.2 C313.9 86.9 313.1 88.5 311.8 93.7 C310.6 98.9 308.5 105.8 307.0 112.4 C305.5 119.0 304.1 126.3 302.9 133.2 C301.7 140.1 300.5 147.1 300.0 154.0 C299.5 160.9 299.9 167.8 300.0 174.7 C300.1 181.6 300.4 188.6 300.8 195.5 C301.2 202.4 301.9 209.4 302.5 216.3 C303.1 223.2 303.7 231.4 304.1 237.0 C304.5 242.6 305.2 245.6 305.0 249.6 C304.8 253.6 303.6 255.5 302.9 260.8 C302.2 266.1 301.1 274.7 300.8 281.6 C300.6 288.5 300.7 295.5 301.4 302.4 C302.1 309.3 303.7 316.3 305.0 323.2 C306.3 330.1 308.1 337.1 309.1 344.0 C310.1 350.9 310.5 357.8 310.8 364.7 C311.1 371.6 311.0 378.6 311.2 385.5 C311.4 392.4 311.0 399.4 311.8 406.3 C312.6 413.2 314.8 421.4 316.0 427.0 C317.2 432.6 317.9 435.6 319.0 439.6 C320.1 443.6 320.5 445.5 322.5 450.8 C324.5 456.1 328.2 464.7 330.8 471.6 C333.4 478.5 335.9 485.5 338.0 492.4 C340.1 499.3 341.4 506.3 343.3 513.2 C345.2 520.1 347.9 527.1 349.5 534.0 C351.1 540.9 351.6 547.8 352.6 554.7 C353.6 561.6 354.3 568.6 355.7 575.5 C357.1 582.4 359.7 589.4 361.0 596.3 C362.3 603.2 363.0 611.5 363.6 617.0 C364.2 622.5 364.1 626.1 364.5 629.6 C364.9 633.1 365.9 632.3 366.3 638.3 C366.7 644.3 367.0 653.5 367.0 665.7 C367.0 677.9 366.2 700.0 366.3 711.4 C366.4 722.8 366.1 726.7 367.4 734.3 C368.7 741.9 371.2 750.2 374.3 757.1 C377.4 764.0 381.9 769.3 385.7 775.4 C389.5 781.5 393.3 787.9 397.1 793.7 C400.9 799.5 404.9 806.0 408.4 810.4 C411.8 814.8 413.8 818.5 417.8 820.3 C421.9 822.1 429.2 821.1 432.7 821.4 C436.2 821.7 437.9 822.0 439.0 822.1" fill="none" stroke="#e06c5c" stroke-width="2.4" stroke-linecap="round" stroke-linejoin="round"/><path d="M432.7 814.6 L439 822.1 L431.8 827.3" fill="none" stroke="#e06c5c" stroke-width="2.2" stroke-linecap="round" stroke-linejoin="round"/></svg>
<div class="a" style="left:964px;top:866px;width:214px;height:77px;background:rgba(170,170,170,0.55);"></div>
<div class="a" style="left:982px;top:850.5px;font-family:'Liberation Sans',sans-serif;font-size:81px;line-height:100px;color:#fff;letter-spacing:-2px;white-space:nowrap">dir.by</div>
</body></html>
